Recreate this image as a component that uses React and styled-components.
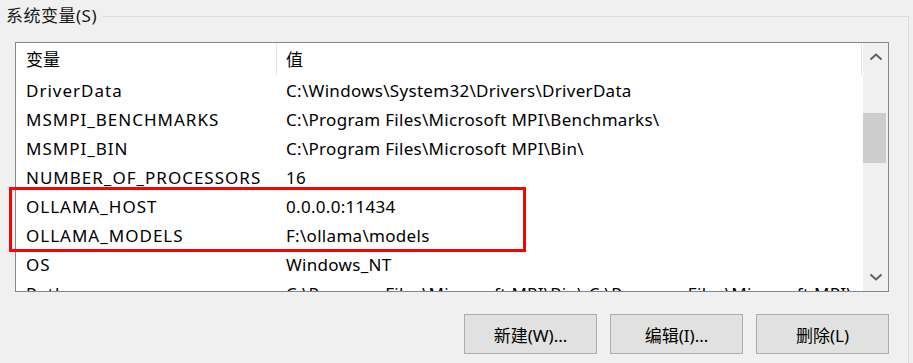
import React from "react";
import styled, { createGlobalStyle } from "styled-components";

const rows = [
  { name: "DriverData", value: "C:\\Windows\\System32\\Drivers\\DriverData" },
  { name: "MSMPI_BENCHMARKS", value: "C:\\Program Files\\Microsoft MPI\\Benchmarks\\" },
  { name: "MSMPI_BIN", value: "C:\\Program Files\\Microsoft MPI\\Bin\\" },
  { name: "NUMBER_OF_PROCESSORS", value: "16" },
  { name: "OLLAMA_HOST", value: "0.0.0.0:11434" },
  { name: "OLLAMA_MODELS", value: "F:\\ollama\\models" },
  { name: "OS", value: "Windows_NT" },
  {
    name: "Path",
    value: "C:\\Program Files\\Microsoft MPI\\Bin\\;C:\\Program Files\\Microsoft MPI\\",
  },
];

const Chevron = ({ down }) => (
  <svg width="14" height="8" viewBox="0 0 14 8">
    <path
      d={down ? "M1.5 1.5 L7 6.5 L12.5 1.5" : "M1.5 6.5 L7 1.5 L12.5 6.5"}
      fill="none"
      stroke="#606060"
      strokeWidth="2"
    />
  </svg>
);

const App = () => {
  return (
    <>
      <GlobalStyle />
      <S.GroupBox>
        <S.LegendRow>
          <S.Title>系统变量(S)</S.Title>
          <S.Rule />
        </S.LegendRow>
        <S.Content>
          <S.ListBox>
            <S.Table>
              <S.HeaderRow>
                <S.HeaderCell>变量</S.HeaderCell>
                <S.HeaderCell value>值</S.HeaderCell>
              </S.HeaderRow>
              {rows.map((row) => (
                <S.Row key={row.name}>
                  <S.NameCell>{row.name}</S.NameCell>
                  <S.ValueCell>{row.value}</S.ValueCell>
                </S.Row>
              ))}
            </S.Table>
            <S.ScrollBar>
              <S.Arrow>
                <Chevron />
              </S.Arrow>
              <S.Track>
                <S.Thumb />
              </S.Track>
              <S.Arrow>
                <Chevron down />
              </S.Arrow>
            </S.ScrollBar>
          </S.ListBox>
          <S.Highlight />
          <S.ButtonRow>
            <S.Button>新建(W)...</S.Button>
            <S.Button>编辑(I)...</S.Button>
            <S.Button>删除(L)</S.Button>
          </S.ButtonRow>
        </S.Content>
      </S.GroupBox>
    </>
  );
};

export default App;

const GlobalStyle = createGlobalStyle`
  html, body {
    margin: 0;
    padding: 0;
    width: 913px;
    height: 363px;
    overflow: hidden;
    background: #f0f0f0;
  }
  body {
    font-family: "Noto Sans", "Noto Sans CJK SC", sans-serif;
    font-size: 17px;
    color: #000;
  }
`;

const S = {
  GroupBox: styled.div`
    width: 909px;
    display: flex;
    flex-direction: column;
  `,

  LegendRow: styled.div`
    display: flex;
    height: 32px;
  `,

  Title: styled.span`
    padding-left: 6px;
    line-height: 32px;
    letter-spacing: 0.5px;
    color: #1a1a1a;
  `,

  Rule: styled.div`
    flex: 1;
    margin-left: 6px;
    margin-top: 16px;
    border-top: 1px solid #dcdcdc;
    border-right: 1px solid #dcdcdc;
  `,

  Content: styled.div`
    position: relative;
    height: 331px;
    box-sizing: border-box;
    padding: 10px 19px 0 15px;
    border-right: 1px solid #dcdcdc;
  `,

  ListBox: styled.div`
    height: 250px;
    box-sizing: border-box;
    border: 1px solid #828790;
    background: #fff;
    display: flex;
    overflow: hidden;
  `,

  Table: styled.div`
    flex: 1;
    overflow: hidden;
  `,

  HeaderRow: styled.div`
    display: grid;
    grid-template-columns: 261px 585px;
    height: 33px;
  `,

  HeaderCell: styled.div`
    display: flex;
    align-items: center;
    padding-left: ${(props) => (props.value ? "9px" : "10px")};
    padding-bottom: 1px;
    border-right: 1px solid #e5e5e5;
    margin-bottom: 1px;
  `,

  Row: styled.div`
    display: grid;
    grid-template-columns: 261px 1fr;
    height: 29px;
    align-items: center;
    white-space: nowrap;
  `,

  NameCell: styled.div`
    padding-left: 10px;
    letter-spacing: 1px;
    overflow: hidden;
  `,

  ValueCell: styled.div`
    padding-left: 9px;
    letter-spacing: 0.3px;
    overflow: hidden;
  `,

  ScrollBar: styled.div`
    width: 25px;
    background: #f0f0f0;
    display: flex;
    flex-direction: column;
  `,

  Arrow: styled.div`
    height: 28px;
    display: flex;
    align-items: center;
    justify-content: center;
  `,

  Track: styled.div`
    flex: 1;
    padding-top: 42px;
  `,

  Thumb: styled.div`
    width: 23px;
    height: 50px;
    background: #cdcdcd;
  `,

  Highlight: styled.div`
    position: absolute;
    left: 9px;
    top: 155px;
    width: 517px;
    height: 65px;
    box-sizing: border-box;
    border: 3px solid #f00;
    pointer-events: none;
  `,

  ButtonRow: styled.div`
    display: flex;
    justify-content: flex-end;
    gap: 13px;
    margin-top: 22px;
  `,

  Button: styled.button`
    width: 133px;
    height: 40px;
    box-sizing: border-box;
    background: #e1e1e1;
    border: 1px solid #adadad;
    font-family: "Noto Sans", "Noto Sans CJK SC", sans-serif;
    font-size: 17px;
    color: #000;
    padding: 0;
  `,
};
